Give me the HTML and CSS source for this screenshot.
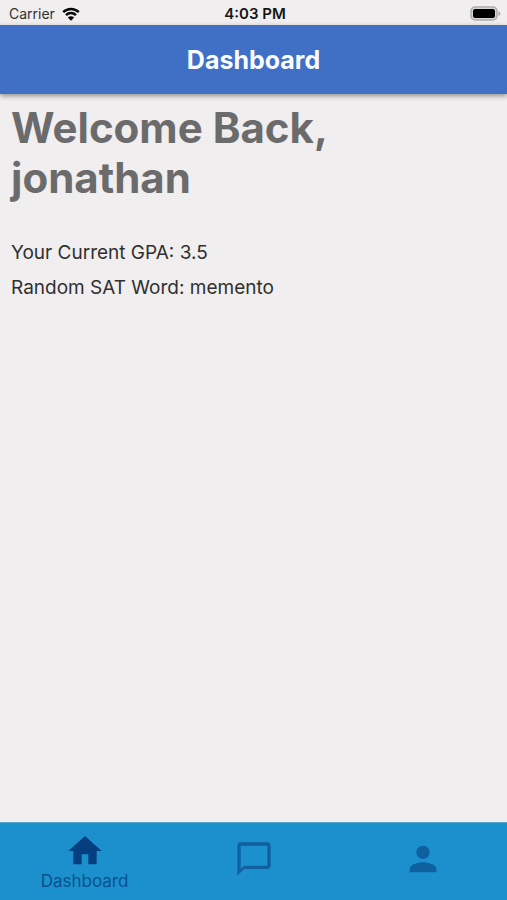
FILE: index.html
```html
<!DOCTYPE html>
<html lang="en">
<head>
<meta charset="utf-8">
<meta name="viewport" content="width=device-width, initial-scale=1">
<title>Dashboard</title>
<link rel="stylesheet" href="styles.css">
</head>
<body>
<div class="status">
  <div class="carrier">
    <span>Carrier</span>
    <svg class="wifi" viewBox="0 0 18 14" aria-hidden="true">
      <path d="M1.2 5.2a11.2 11.2 0 0 1 15.6 0M4 8.1a7.2 7.2 0 0 1 10 0" fill="none" stroke="#080808" stroke-width="2.5"/>
      <path d="M9 13.8 5.8 10.5a4.6 4.6 0 0 1 6.4 0z" fill="#080808"/>
    </svg>
  </div>
  <div class="time">4:03 PM</div>
  <svg class="battery" viewBox="0 0 31 15" aria-hidden="true">
    <rect x="1" y="1" width="26" height="13" rx="4" fill="#d8d7d7" stroke="#adacac" stroke-width="1.5"/>
    <rect x="3" y="3" width="22" height="9" rx="2" fill="#000"/>
    <path d="M28.5 5v5q2-1 2-2.500t-2-2.500z" fill="#adacac"/>
  </svg>
</div>
<header class="appbar"><h1 class="title">Dashboard</h1></header>
<main class="content">
  <h2 class="welcome">Welcome Back,<br>jonathan</h2>
  <p class="line">Your Current GPA: 3.5</p>
  <p class="line">Random SAT Word: memento</p>
</main>
<nav class="tabs" aria-label="Main">
  <a class="tab active" href="#dashboard" aria-current="page">
    <svg class="icon" viewBox="0 0 24 24" aria-hidden="true"><path d="M10 20v-6h4v6h5v-8h3L12 3 2 12h3v8z"/></svg>
    <span class="label">Dashboard</span>
  </a>
  <a class="tab" href="#messages" aria-label="Messages">
    <svg class="icon" viewBox="0 0 24 24" aria-hidden="true"><path d="M20 2H4c-1.100 0-2 .9-2 2v18l4-4h14c1.100 0 2-.9 2-2V4c0-1.100-.9-2-2-2zm0 14H6l-2 2V4h16v12z"/></svg>
  </a>
  <a class="tab" href="#profile" aria-label="Profile">
    <svg class="icon" viewBox="0 0 24 24" aria-hidden="true"><path d="M12 12c2.210 0 4-1.790 4-4s-1.790-4-4-4-4 1.790-4 4 1.790 4 4 4zm0 2c-2.670 0-8 1.340-8 4v2h16v-2c0-2.660-5.330-4-8-4z"/></svg>
  </a>
</nav>
</body>
</html>
```
FILE: styles.css
```css
* {
  box-sizing: border-box;
}

body {
  margin: 0;
  min-height: 100vh;
  display: flex;
  flex-direction: column;
  background: #f0eeef;
  color: #303030;
  font-family: Inter, "Liberation Sans", sans-serif;
}

.status {
  display: grid;
  grid-template-columns: 1fr auto 1fr;
  align-items: center;
  height: 25px;
  padding: 2px 6px 0 9px;
  font-size: 14px;
  line-height: 20px;
}

.carrier {
  display: flex;
  align-items: center;
  gap: 7px;
}

.wifi {
  width: 18px;
  height: 14px;
}

.time {
  color: #161616;
  font-size: 15px;
  font-weight: 600;
}

.battery {
  width: 31px;
  height: 15px;
  justify-self: end;
}

.appbar {
  display: flex;
  align-items: center;
  justify-content: center;
  height: 69px;
  background: #4070c6;
  box-shadow: 0 2px 5px rgba(0, 0, 0, 0.4);
}

.title {
  margin: 0;
  color: #fafcff;
  font-size: 25px;
  font-weight: 700;
  line-height: 32px;
}

.content {
  flex: 1;
  padding: 9px 11px;
}

.welcome {
  margin: 0 0 32px;
  color: #6c6b6c;
  font-size: 42px;
  font-weight: 700;
  line-height: 50px;
}

.line {
  margin: 0;
  font-size: 19px;
  line-height: 35px;
}

.tabs {
  display: flex;
  height: 78px;
  background: #1b90cd;
  border-top: 1px solid #58a6cf;
}

.tab {
  flex: 1;
  display: flex;
  flex-direction: column;
  align-items: center;
  padding-top: 16px;
  color: #105f9f;
  text-decoration: none;
}

.active {
  padding-top: 8px;
  color: #063f80;
}

.icon {
  width: 40px;
  height: 40px;
  fill: currentColor;
}

.label {
  color: #09508f;
  font-size: 17px;
  line-height: 20px;
}
```
